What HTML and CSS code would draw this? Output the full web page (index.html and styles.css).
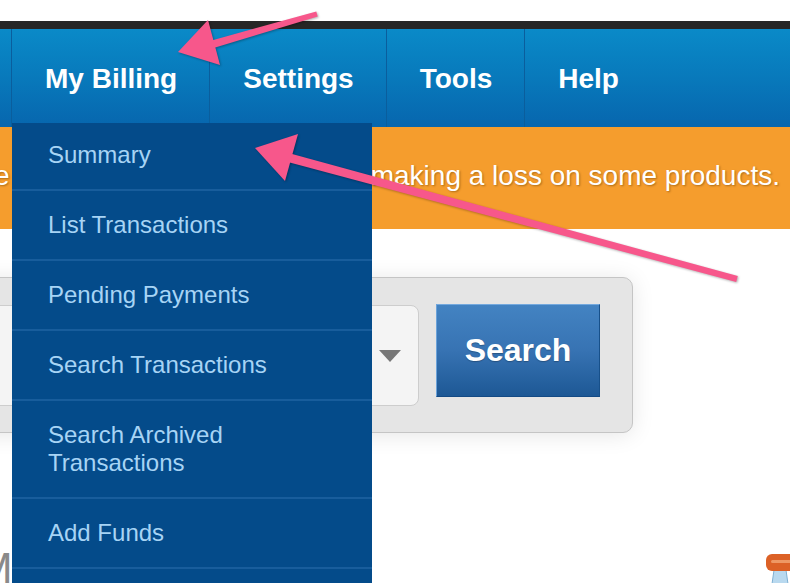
FILE: index.html
```html
<!DOCTYPE html>
<html lang="en">
<head>
<meta charset="utf-8">
<title>My Billing</title>
<link rel="stylesheet" href="styles.css">
</head>
<body>
<div class="page">
  <div class="top-space"></div>
  <div class="dark-bar"></div>
  <nav class="main-nav">
    <a class="nav-item" href="#">My Billing</a>
    <a class="nav-item" href="#">Settings</a>
    <a class="nav-item" href="#">Tools</a>
    <a class="nav-item" href="#">Help</a>
  </nav>
  <div class="alert">
    <span class="alert-text">Please note that after your last price change it would appear that you are making a loss on some products.</span>
  </div>
  <main class="content">
    <div class="search-panel">
      <div class="select-box"><span class="select-arrow"></span></div>
      <button class="search-btn" type="button">Search</button>
    </div>
    <div class="lower-row">
      <h1 class="page-title">My Billing</h1>
      <svg class="promo-icon" width="30" height="30" viewBox="0 0 30 30">
        <path d="M9 16 L21 16 L23 30 L7 30 Z" fill="#b9d9ef" stroke="#7fb0d3" stroke-width="1"/>
        <rect x="1" y="0" width="40" height="17" rx="6" fill="#dc6126"/>
        <rect x="6" y="6" width="30" height="3" rx="1.5" fill="#f3a674" opacity="0.8"/>
      </svg>
    </div>
  </main>

  <ul class="dropdown">
    <li class="drop-item">Summary</li>
    <li class="drop-item">List Transactions</li>
    <li class="drop-item">Pending Payments</li>
    <li class="drop-item">Search Transactions</li>
    <li class="drop-item">Search Archived Transactions</li>
    <li class="drop-item">Add Funds</li>
    <li class="drop-item">Invoices</li>
  </ul>

  <svg class="annotations" width="790" height="583" viewBox="0 0 790 583">
    <g fill="#f7578b">
      <polygon points="317.7,16.6 316.3,11.4 208.9,41.2 211.1,48.8"/>
      <polygon points="178,52 208,20 220,65"/>
      <polygon points="736.2,281.9 737.8,276.1 291.2,153.7 288.8,162.3"/>
      <polygon points="255,148 298,134 285,181"/>
    </g>
  </svg>
</div>
</body>
</html>
```
FILE: styles.css
```css
* {
  box-sizing: border-box;
}

html, body {
  margin: 0;
  padding: 0;
  background: #ffffff;
}

.page {
  position: relative;
  width: 790px;
  height: 583px;
  overflow: hidden;
  font-family: "Liberation Sans", Arial, sans-serif;
}

.top-space {
  height: 21px;
  background: #ffffff;
}

.dark-bar {
  height: 8px;
  background: #262626;
}

.main-nav {
  display: flex;
  height: 98px;
  padding-left: 11px;
  background: linear-gradient(to bottom, #0a8ac8 0%, #0879bb 50%, #0766ae 100%);
}

.nav-item {
  display: flex;
  align-items: center;
  padding: 1px 32px 0 33px;
  border-left: 1px solid #0a5e9d;
  color: #ffffff;
  font-size: 28px;
  font-weight: bold;
  text-decoration: none;
  white-space: nowrap;
}

.alert {
  display: flex;
  justify-content: flex-end;
  align-items: center;
  height: 102px;
  padding: 0 10px 4px 0;
  background: #f59d2d;
  overflow: hidden;
}

.alert-text {
  flex-shrink: 0;
  white-space: nowrap;
  color: #ffffff;
  font-size: 28px;
  text-shadow: 1px 1px 2px rgba(90, 50, 0, 0.45);
}

.content {
  padding-top: 48px;
}

.search-panel {
  display: flex;
  align-items: flex-start;
  gap: 17px;
  width: 693px;
  margin-left: -60px;
  padding: 27px 32px 26px 28px;
  background: #e5e5e5;
  border: 1px solid #c5c5c5;
  border-radius: 10px;
  box-shadow: 0 2px 22px rgba(0, 0, 0, 0.10);
}

.select-box {
  flex: 1;
  display: flex;
  justify-content: flex-end;
  align-items: center;
  height: 101px;
  padding-right: 17px;
  background: #f4f4f4;
  border: 1px solid #cdcdcd;
  border-radius: 8px;
}

.select-arrow {
  width: 0;
  height: 0;
  border-left: 11px solid transparent;
  border-right: 11px solid transparent;
  border-top: 12px solid #777777;
}

.search-btn {
  width: 164px;
  height: 93px;
  margin-top: -1px;
  padding: 0;
  font-family: "Liberation Sans", Arial, sans-serif;
  font-size: 32px;
  font-weight: bold;
  color: #ffffff;
  background: linear-gradient(to bottom, #4383c2 0%, #3773b3 50%, #1d5895 100%);
  border: 1px solid;
  border-color: #74a9de #17508a #134a85 #6aa2da;
  text-shadow: 0 1px 1px rgba(0, 0, 0, 0.25);
}

.lower-row {
  display: flex;
  justify-content: space-between;
  align-items: flex-start;
  width: 819px;
  margin-top: 111px;
  margin-left: -24px;
}

.page-title {
  margin: 0;
  font-size: 44px;
  line-height: 50px;
  font-weight: normal;
  color: #8a8a8a;
  white-space: nowrap;
}

.promo-icon {
  margin-top: 10px;
  flex-shrink: 0;
}

.dropdown {
  position: absolute;
  top: 123px;
  left: 12px;
  width: 360px;
  height: 470px;
  margin: 0;
  padding: 0;
  list-style: none;
  background: #044b8a;
}

.drop-item {
  padding: 20px 36px 20px 36px;
  border-top: 2px solid #185d9c;
  color: #a7d4f5;
  font-size: 24px;
  line-height: 28px;
}

.drop-item:first-child {
  padding-top: 18px;
  border-top: none;
}

.annotations {
  position: absolute;
  top: 0;
  left: 0;
  pointer-events: none;
  filter: drop-shadow(1px 1px 1px rgba(0, 0, 0, 0.3));
}
```
